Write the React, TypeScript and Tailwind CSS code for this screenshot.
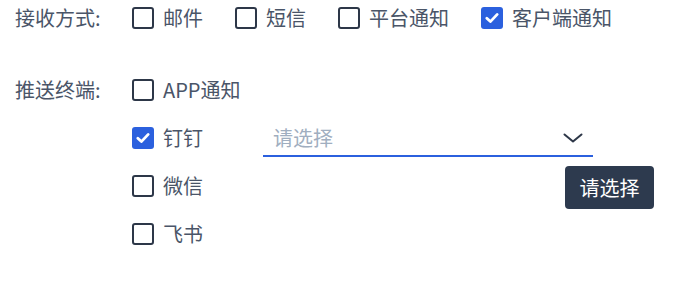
import React from "react";

const font = { fontFamily: '"Noto Sans CJK SC", "Noto Sans", sans-serif' };

function Box({ checked }: { checked?: boolean }) {
  if (checked) {
    return (
      <span className="flex h-[22px] w-[22px] shrink-0 items-center justify-center rounded-[3px] bg-[#2b60de]">
        <svg width="16" height="16" viewBox="0 0 16 16" fill="none">
          <path d="M2.8 8.2 L6.4 11.6 L13.2 4.4" stroke="white" strokeWidth="2.8" strokeLinecap="round" strokeLinejoin="round" />
        </svg>
      </span>
    );
  }
  return <span className="block h-[22px] w-[22px] shrink-0 rounded-[3px] border-2 border-[#2d3748] bg-white" />;
}

function Check({ label, checked, className = "" }: { label: string; checked?: boolean; className?: string }) {
  return (
    <label className={`flex items-center gap-[9px] ${className}`}>
      <Box checked={checked} />
      <span className="text-[20px] leading-none text-[#4a5568]">{label}</span>
    </label>
  );
}

export default function App() {
  return (
    <div className="h-[283px] w-[685px] bg-white pl-[15px]" style={font}>
      <div className="flex h-[36px] items-center">
        <div className="w-[117px] text-[20px] leading-none text-[#4a5568]">接收方式:</div>
        <div className="flex items-center gap-[32px]">
          <Check label="邮件" />
          <Check label="短信" />
          <Check label="平台通知" />
          <Check label="客户端通知" checked />
        </div>
      </div>
      <div className="mt-[30px] flex">
        <div className="flex h-[48px] w-[117px] items-center text-[20px] leading-none text-[#4a5568]">推送终端:</div>
        <div className="flex flex-col">
          <div className="flex h-[48px] items-center">
            <Check label="APP通知" />
          </div>
          <div className="flex h-[48px] items-center">
            <Check label="钉钉" checked className="w-[131px]" />
            <div className="relative">
              <div className="flex h-[38px] w-[330px] items-center justify-between border-b-2 border-[#2b60de] pl-[10px] pr-[10px] pt-[2px]">
                <span className="text-[20px] leading-none text-[#a0aec0]">请选择</span>
                <svg width="20" height="10" viewBox="0 0 20 10" fill="none">
                  <path d="M1.5 1.5 L10 8.5 L18.5 1.5" stroke="#2d3748" strokeWidth="2" strokeLinecap="round" strokeLinejoin="round" />
                </svg>
              </div>
              <div className="absolute left-[302px] top-[47px] flex h-[43px] w-[89px] items-center justify-center rounded-[4px] bg-[#2d3a4e] text-[20px] leading-none text-white">
                请选择
              </div>
            </div>
          </div>
          <div className="flex h-[48px] items-center">
            <Check label="微信" />
          </div>
          <div className="flex h-[48px] items-center">
            <Check label="飞书" />
          </div>
        </div>
      </div>
    </div>
  );
}
